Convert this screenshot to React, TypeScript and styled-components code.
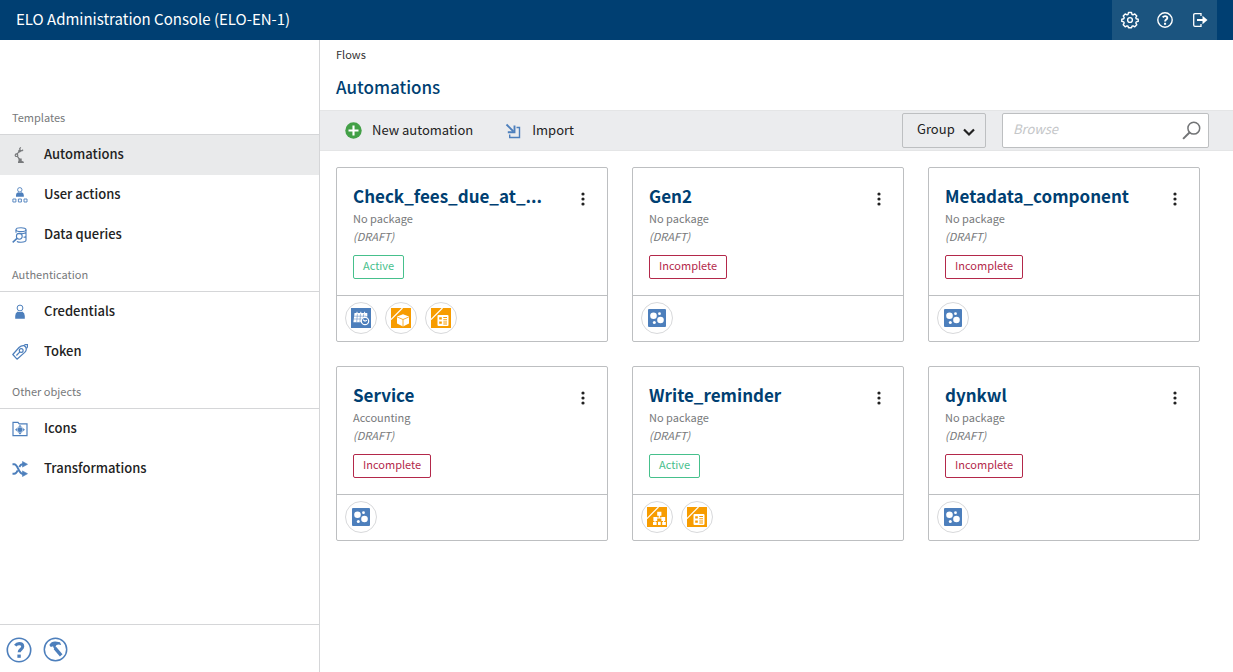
import React from "react";
import styled, { createGlobalStyle } from "styled-components";

const font = `"Noto Sans CJK SC", "Noto Sans", sans-serif`;
const blue = "#4d7fbc";
const navy = "#003f72";

const GlobalStyle = createGlobalStyle`
  *, *::before, *::after { box-sizing: border-box; }
  body {
    margin: 0;
    background: #fff;
    color: #222;
    font-family: ${font};
    font-size: 13px;
    line-height: 18px;
  }
  button, input, select { font: inherit; color: inherit; }
  svg { display: block; flex: none; }
`;

const Page = styled.div`
  min-height: 100vh;
  display: flex;
  flex-direction: column;
`;

const Header = styled.header`
  height: 40px;
  display: flex;
  align-items: center;
  justify-content: space-between;
  padding: 0 16px;
  background: ${navy};
  color: #fff;
`;

const Product = styled.div`
  padding-bottom: 2px;
  font-size: 15px;
  line-height: 24px;
`;

const HeaderActions = styled.div`
  display: flex;
  height: 40px;
  background: #1b547f;
`;

const HeaderButton = styled.button`
  width: 35px;
  display: grid;
  place-items: center;
  padding: 0;
  border: 0;
  background: none;
  color: #fff;
`;

const Body = styled.div`
  flex: 1;
  display: flex;
`;

const Sidebar = styled.aside`
  flex: 0 0 320px;
  display: flex;
  flex-direction: column;
  border-right: 1px solid #d5d6d8;
`;

const Nav = styled.nav`
  flex: 1;
  padding-top: 58px;
`;

const SectionTitle = styled.h2`
  margin: 0;
  height: 37px;
  padding: 10px 12px 8px;
  border-bottom: 1px solid #d5d6d8;
  font-size: 11px;
  font-weight: 400;
  line-height: 18px;
  color: #77797b;
`;

const List = styled.ul`
  margin: 0;
  padding: 0;
  list-style: none;
`;

const NavLink = styled.a<{ $active?: boolean }>`
  height: 40px;
  display: flex;
  align-items: center;
  gap: 16px;
  padding: 0 12px;
  background: ${(p) => (p.$active ? "#e9eaeb" : "transparent")};
  color: #222;
  font-size: 13px;
  font-weight: 500;
  line-height: 20px;
  text-decoration: none;
`;

const Label = styled.span`
  padding-bottom: 2px;
`;

const SidebarFooter = styled.div`
  height: 48px;
  display: flex;
  align-items: center;
  gap: 11px;
  padding: 2px 6px 0;
  border-top: 1px solid #d5d6d8;
`;

const IconButton = styled.button`
  display: grid;
  place-items: center;
  padding: 0;
  border: 0;
  background: none;
  color: ${blue};
`;

const Main = styled.main`
  flex: 1;
  min-width: 0;
`;

const Heading = styled.div`
  height: 70px;
  padding: 5px 16px 0;
`;

const Crumb = styled.div`
  font-size: 11px;
  line-height: 18px;
  color: #333;
`;

const Title = styled.h1`
  margin: 12px 0 0;
  font-size: 17px;
  font-weight: 500;
  line-height: 24px;
  color: ${navy};
`;

const Toolbar = styled.div`
  height: 41px;
  display: flex;
  align-items: center;
  gap: 16px;
  padding: 0 24px 0 25px;
  border: solid #e4e5e6;
  border-width: 1px 0;
  background: #ebecee;
`;

const Actions = styled.div`
  flex: 1;
  display: flex;
  gap: 32px;
`;

const ActionButton = styled.button`
  display: flex;
  align-items: center;
  gap: 10px;
  padding: 0;
  border: 0;
  background: none;
  font-size: 13px;
  line-height: 20px;
`;

const GroupField = styled.div`
  position: relative;
  width: 84px;
  svg {
    position: absolute;
    right: 11px;
    top: 15px;
    pointer-events: none;
  }
`;

const GroupSelect = styled.select`
  appearance: none;
  display: block;
  width: 100%;
  height: 35px;
  padding: 0 28px 4px 14px;
  border: 1px solid #bdbfc1;
  border-radius: 2px;
  background: #ebecee;
  font-size: 13px;
`;

const SearchBox = styled.div`
  width: 207px;
  height: 35px;
  display: flex;
  align-items: center;
  padding: 0 7px 0 10px;
  border: 1px solid #bdbfc1;
  border-radius: 2px;
  background: #fff;
  color: #727476;
`;

const SearchInput = styled.input`
  flex: 1;
  min-width: 0;
  height: 24px;
  padding: 0 0 4px;
  border: 0;
  outline: 0;
  background: none;
  font-size: 13px;
  &::placeholder {
    color: #c4c6c8;
    font-style: italic;
    opacity: 1;
  }
`;

const Cards = styled.div`
  display: grid;
  grid-template-columns: repeat(auto-fill, 272px);
  gap: 24px;
  padding: 16px;
`;

const CardBox = styled.article`
  border: 1px solid #bdbfc1;
  border-radius: 2px;
  background: #fff;
`;

const CardBody = styled.div`
  height: 128px;
  padding: 14px 16px;
  border-bottom: 1px solid #bdbfc1;
`;

const CardHead = styled.div`
  display: flex;
  align-items: center;
  justify-content: space-between;
  height: 27px;
`;

const CardTitle = styled.h2`
  margin: 0;
  font-size: 17px;
  font-weight: 700;
  line-height: 26px;
  color: ${navy};
`;

const MenuButton = styled(IconButton)`
  width: 16px;
  height: 20px;
  padding-top: 6px;
  color: #222;
`;

const Meta = styled.div<{ $draft?: boolean }>`
  font-size: 11px;
  line-height: 18px;
  color: #77797b;
  font-style: ${(p) => (p.$draft ? "italic" : "normal")};
`;

const Status = styled.span<{ $active: boolean }>`
  display: block;
  width: fit-content;
  height: 24px;
  margin-top: 10px;
  padding: 0 9px;
  border: 1px solid;
  border-radius: 2px;
  font-size: 11px;
  line-height: 18px;
  color: ${(p) => (p.$active ? "#46c08c" : "#b3284a")};
`;

const CardFooter = styled.div`
  display: flex;
  gap: 8px;
  padding: 6px 8px 7px;
`;

const Bubble = styled.span`
  width: 32px;
  height: 32px;
  display: grid;
  place-items: center;
  border: 1px solid #d8d9db;
  border-radius: 50%;
`;

const GearIcon = () => (
  <svg width="18" height="18" viewBox="0 0 18 18" fill="none" stroke="currentColor" strokeWidth="1.4" strokeLinejoin="round">
    <path d="M7.500 1.500h3l.5 2 1 .4 1.800-1 2 2-1 1.800.4 1 2 .5v2.200l-2 .5-.4 1 1 1.900-2 2-1.800-1-1 .4-.5 1.600h-3L7 15.200l-1-.4-1.800 1-2-2 1-1.900-.4-1-2-.5V8.200l2-.5.4-1-1-1.800 2-2 1.800 1 1-.4z" />
    <circle cx="9" cy="9" r="2.400" />
  </svg>
);

const HelpIcon = ({ size = 16, stroke = 1.4 }: { size?: number; stroke?: number }) => (
  <svg width={size} height={size} viewBox="0 0 16 16" fill="none" stroke="currentColor" strokeWidth={stroke}>
    <circle cx="8" cy="8" r="7.200" />
    <path d="M5.700 5.300c.7-.9 1.500-1.200 2.400-1.200 1.300 0 2.200.7 2.200 1.800 0 1.600-2.200 1.700-2.200 3.500" strokeWidth="1.900" />
    <path d="M7 10.800h2.100v2H7z" fill="currentColor" stroke="none" />
  </svg>
);

const LogoutIcon = () => (
  <svg width="16" height="16" viewBox="0 0 16 16" fill="none" stroke="currentColor">
    <path d="M9 4V1.700H3Q1.700 1.700 1.700 3v10q0 1.300 1.300 1.300h6V12" strokeWidth="1.300" />
    <path d="M5 8h7" strokeWidth="2" />
    <path d="M10.500 3.800 15.500 8l-5 4.200z" fill="currentColor" stroke="none" />
  </svg>
);

const RobotIcon = () => (
  <svg width="16" height="16" viewBox="0 0 16 16" fill="none" stroke="#77797b" strokeWidth="1.200">
    <path d="M4.600 7.300 7.400 4.400M5.200 9.200l3 4" />
    <path d="M8.800.4 7.700 1.700l.5 1.700 1.700.5 1.200-1.100" />
    <circle cx="4.500" cy="8.200" r="1.300" />
    <circle cx="7.600" cy="4.100" r=".8" fill="#77797b" />
    <path d="M6.500 11.500h3.200v2.200l2.100 1.100V16H6v-1.200l.5-.9z" fill="#77797b" stroke="none" />
  </svg>
);

const UserActionsIcon = () => (
  <svg width="16" height="16" viewBox="0 0 16 16" fill="none" stroke={blue}>
    <circle cx="7.800" cy="2.800" r="2.200" strokeWidth=".9" />
    <path d="M4 9.800V8q0-2 2.200-2.700 1.700.9 3.400 0Q11.800 6 11.800 8v1.800z" fill={blue} stroke="none" />
    <path d="M.9 12h3v3h-3zM6.400 12h3v3h-3zM12 12h3v3h-3z" strokeWidth=".9" />
  </svg>
);

const DataQueryIcon = () => (
  <svg width="16" height="16" viewBox="0 0 16 16" fill="none" stroke={blue} strokeWidth="1.100">
    <ellipse cx="9" cy="2.700" rx="5" ry="1.900" />
    <path d="M4 2.700v3M14 2.700v10.600c0 1.100-2.200 1.900-5 1.900-1.700 0-3.200-.3-4.100-.8M6 6.500c3 .6 8 0 8-1.600M11.500 10.300c1.500-.2 2.500-.7 2.500-1.300" />
    <circle cx="7.300" cy="9.300" r="2.900" />
    <path d="m5 11.400-4.300 4" strokeWidth="1.500" />
  </svg>
);

const PersonIcon = () => (
  <svg width="16" height="16" viewBox="0 0 16 16">
    <circle cx="8" cy="4" r="2.900" fill="none" stroke={blue} />
    <path d="M3.200 14.800V12q0-3.300 2.600-4.500Q8 8.600 10.200 7.500q2.600 1.200 2.600 4.500v2.800z" fill={blue} />
  </svg>
);

const TokenIcon = () => (
  <svg width="16" height="16" viewBox="0 0 16 16" fill="none" stroke={blue} strokeWidth="1.200">
    <path d="M.8 10.500 7 3.500q2.300-2.300 5-1.900 2.700 1.200 2.200 4.200-.3 1.300-1.500 2.600L5 15.200z" strokeLinejoin="round" />
    <circle cx="9.200" cy="6.500" r="1.900" />
    <path d="m7.900 7.900-3.500 3.600M12 1.300l1.600-.8 1.900.1.100 2.100-1.100 1.600" />
  </svg>
);

const FolderIcon = () => (
  <svg width="16" height="16" viewBox="0 0 16 16" fill="none" stroke={blue}>
    <path d="M1 14.700V1.400h5l1.200 1.500H15v11.800z" strokeWidth="1.200" />
    <path d="m8 4 4.800 4.700L8 13.400 3.200 8.700z" fill="#a9c2e0" stroke="none" />
    <path d="m8 4 1.400 1.600H6.600zM8 13.400l1.400-1.600H6.600zM3.200 8.700l1.600-1.400v2.800zM12.800 8.700l-1.600-1.400v2.800z" fill={blue} stroke="none" />
    <circle cx="8" cy="8.700" r="2.300" fill={blue} stroke="none" />
  </svg>
);

const ShuffleIcon = () => (
  <svg width="16" height="16" viewBox="0 0 16 16" fill="none" stroke={blue} strokeWidth="1.900">
    <path d="M.5 3.200h1.700c3.800 0 4.200 9.500 8.500 9.500H12M.5 12.700h1.700c1.700 0 2.700-1.600 3.500-3.400M7.300 6c.8-1.700 1.700-2.800 3.400-2.800H12" />
    <path d="m10.500.5 5 2.800-5 2.800zM10.500 9.900l5 2.800-5 2.800z" fill={blue} stroke={blue} strokeWidth=".6" />
  </svg>
);

const ToolIcon = () => (
  <svg width="25" height="25" viewBox="0 0 25 25" fill="none" stroke="currentColor">
    <circle cx="12.500" cy="12.500" r="11.200" strokeWidth="1.500" />
    <path d="M6.300 8Q8.500 4.300 12.500 4.600l4.500.6 1.200 2.900q-2.700-1.200-4.700-.2L12.300 10l-2.200-.8-2.300.9z" fill="currentColor" stroke="none" />
    <path d="m10.900 9 1.800 3.200" strokeWidth="2.200" />
    <path d="m12 11.200 6.200 7.200" strokeWidth="3.400" />
  </svg>
);

const PlusIcon = () => (
  <svg width="17" height="17" viewBox="0 0 17 17">
    <circle cx="8.500" cy="8.500" r="8.200" fill="#43a047" />
    <path d="M8.500 3.500v10M3.500 8.500h10" stroke="#fff" strokeWidth="2.100" />
  </svg>
);

const ImportIcon = () => (
  <svg width="17" height="16" viewBox="0 0 17 16" fill="none" stroke={blue}>
    <path d="M11.500 4.500h3v10H4.700v-3" strokeWidth="1.400" />
    <path d="m1.500 1.500 7 7" strokeWidth="1.900" />
    <path d="M9.500 2.500v6.800H2.800" strokeWidth="1.900" />
  </svg>
);

const ChevronIcon = () => (
  <svg width="12" height="9" viewBox="0 0 12 9" fill="none" stroke="#222" strokeWidth="2.200">
    <path d="m1 1.500 5 5 5-5" />
  </svg>
);

const SearchIcon = () => (
  <svg width="19" height="19" viewBox="0 0 19 19" fill="none" stroke="currentColor">
    <circle cx="11.800" cy="7.200" r="5.900" strokeWidth="1.500" />
    <path d="m7.500 11.500-6.400 6.400" strokeWidth="2" />
  </svg>
);

const KebabIcon = () => (
  <svg width="4" height="14" viewBox="0 0 4 14" fill="currentColor">
    <circle cx="2" cy="2" r="1.600" />
    <circle cx="2" cy="7" r="1.600" />
    <circle cx="2" cy="12" r="1.600" />
  </svg>
);

type NodeKind = "schedule" | "package" | "form" | "tree" | "generic";

const OrangeTile = ({ children }: { children: React.ReactNode }) => (
  <svg width="20" height="20" viewBox="0 0 20 20">
    <path d="M0 0h20v20H0z" fill="#f79c00" />
    <path d="M0 11.500 11.500 0" stroke="#fff" strokeWidth="1.200" />
    {children}
  </svg>
);

const NodeIcon = ({ kind }: { kind: NodeKind }) => {
  switch (kind) {
    case "schedule":
      return (
        <svg width="20" height="20" viewBox="0 0 20 20" fill="none">
          <path d="M0 0h20v20H0z" fill={blue} />
          <path d="M3.500 5h12.800v3.500H15L11.500 10l-1.800 4.200H2.400z" fill="#fff" />
          <path d="M6 3.800v2M9.800 3.800v2M13.600 3.800v2" stroke="#fff" />
          <path d="M3 8.200h12M2.600 11h8M6.400 5.800l-.7 8.400M9.500 5.800l-.6 8.400M12.700 5.800l-.4 3.500" stroke={blue} strokeWidth=".5" />
          <circle cx="14" cy="13" r="3.700" fill={blue} stroke="#fff" strokeWidth="1.200" />
          <path d="M12 11.700 14 13.200l2-1" stroke="#fff" strokeWidth="1.100" />
        </svg>
      );
    case "package":
      return (
        <OrangeTile>
          <path d="m12 6.300 6 2.300v7L12 18.500l-6-2.900v-7z" fill="#fff" />
          <path d="m6.200 9 5.800 2.500L17.800 9M12 11.500v7" fill="none" stroke="#f79c00" strokeWidth=".8" />
        </OrangeTile>
      );
    case "form":
      return (
        <OrangeTile>
          <rect x="6.500" y="7" width="11" height="11" rx="1" fill="#fff" />
          <path d="M8.200 9.200h2.600v2.200H8.200zM8.200 13.500h2.600v2.200H8.200zM12.300 9h3.700v1h-3.700zM12.300 11.200h3.700v1h-3.700zM12.300 13.400h3.700v1h-3.700zM12.300 15.400h3.700v1h-3.700z" fill="#f79c00" />
        </OrangeTile>
      );
    case "tree":
      return (
        <OrangeTile>
          <path d="M10.200 4.700h4.200v4h-4.200zM6.400 10h3.800v4H6.400zM14.400 10h3.800v4h-3.800zM6 15h3.600v3H6zM11 14.800h2.700v3.200H11zM15.200 15h3.600v3h-3.600z" fill="#fff" />
          <path d="M12.300 8v2.700M8 11h8.500M8 13v3M16.600 13v3" fill="none" stroke="#fff" strokeWidth="1.100" />
        </OrangeTile>
      );
    default:
      return (
        <svg width="18" height="18" viewBox="0 0 18 18">
          <rect width="18" height="18" rx="1" fill={blue} />
          <g fill="#fff">
            <circle cx="5.500" cy="6.700" r="3.300" />
            <circle cx="12.500" cy="11" r="3.300" />
            <circle cx="11.500" cy="4.700" r="1.400" />
            <circle cx="6.300" cy="13.500" r="1.500" />
          </g>
        </svg>
      );
  }
};

interface NavItem {
  label: string;
  icon: React.ReactNode;
  active?: boolean;
}

const sections: { title: string; items: NavItem[] }[] = [
  {
    title: "Templates",
    items: [
      { label: "Automations", icon: <RobotIcon />, active: true },
      { label: "User actions", icon: <UserActionsIcon /> },
      { label: "Data queries", icon: <DataQueryIcon /> },
    ],
  },
  {
    title: "Authentication",
    items: [
      { label: "Credentials", icon: <PersonIcon /> },
      { label: "Token", icon: <TokenIcon /> },
    ],
  },
  {
    title: "Other objects",
    items: [
      { label: "Icons", icon: <FolderIcon /> },
      { label: "Transformations", icon: <ShuffleIcon /> },
    ],
  },
];

interface Flow {
  name: string;
  pkg: string;
  active: boolean;
  nodes: NodeKind[];
}

const flows: Flow[] = [
  { name: "Check_fees_due_at_...", pkg: "No package", active: true, nodes: ["schedule", "package", "form"] },
  { name: "Gen2", pkg: "No package", active: false, nodes: ["generic"] },
  { name: "Metadata_component", pkg: "No package", active: false, nodes: ["generic"] },
  { name: "Service", pkg: "Accounting", active: false, nodes: ["generic"] },
  { name: "Write_reminder", pkg: "No package", active: true, nodes: ["tree", "form"] },
  { name: "dynkwl", pkg: "No package", active: false, nodes: ["generic"] },
];

const FlowCard = ({ flow }: { flow: Flow }) => (
  <CardBox>
    <CardBody>
      <CardHead>
        <CardTitle>{flow.name}</CardTitle>
        <MenuButton aria-label="More options">
          <KebabIcon />
        </MenuButton>
      </CardHead>
      <Meta>{flow.pkg}</Meta>
      <Meta $draft>(DRAFT)</Meta>
      <Status $active={flow.active}>{flow.active ? "Active" : "Incomplete"}</Status>
    </CardBody>
    <CardFooter>
      {flow.nodes.map((kind) => (
        <Bubble key={kind}>
          <NodeIcon kind={kind} />
        </Bubble>
      ))}
    </CardFooter>
  </CardBox>
);

export default function App() {
  return (
    <Page>
      <GlobalStyle />
      <Header>
        <Product>ELO Administration Console (ELO-EN-1)</Product>
        <HeaderActions>
          <HeaderButton aria-label="Settings"><GearIcon /></HeaderButton>
          <HeaderButton aria-label="Help"><HelpIcon /></HeaderButton>
          <HeaderButton aria-label="Log out"><LogoutIcon /></HeaderButton>
        </HeaderActions>
      </Header>
      <Body>
        <Sidebar>
          <Nav>
            {sections.map((section) => (
              <section key={section.title}>
                <SectionTitle>{section.title}</SectionTitle>
                <List>
                  {section.items.map((item) => (
                    <li key={item.label}>
                      <NavLink href="#" $active={item.active}>
                        {item.icon}
                        <Label>{item.label}</Label>
                      </NavLink>
                    </li>
                  ))}
                </List>
              </section>
            ))}
          </Nav>
          <SidebarFooter>
            <IconButton aria-label="Help"><HelpIcon size={26} stroke={1} /></IconButton>
            <IconButton aria-label="Tools"><ToolIcon /></IconButton>
          </SidebarFooter>
        </Sidebar>
        <Main>
          <Heading>
            <Crumb>Flows</Crumb>
            <Title>Automations</Title>
          </Heading>
          <Toolbar>
            <Actions>
              <ActionButton><PlusIcon /><Label>New automation</Label></ActionButton>
              <ActionButton><ImportIcon /><Label>Import</Label></ActionButton>
            </Actions>
            <GroupField>
              <GroupSelect aria-label="Group">
                <option>Group</option>
              </GroupSelect>
              <ChevronIcon />
            </GroupField>
            <SearchBox>
              <SearchInput type="text" placeholder="Browse" aria-label="Browse" />
              <SearchIcon />
            </SearchBox>
          </Toolbar>
          <Cards>
            {flows.map((flow) => (
              <FlowCard key={flow.name} flow={flow} />
            ))}
          </Cards>
        </Main>
      </Body>
    </Page>
  );
}
